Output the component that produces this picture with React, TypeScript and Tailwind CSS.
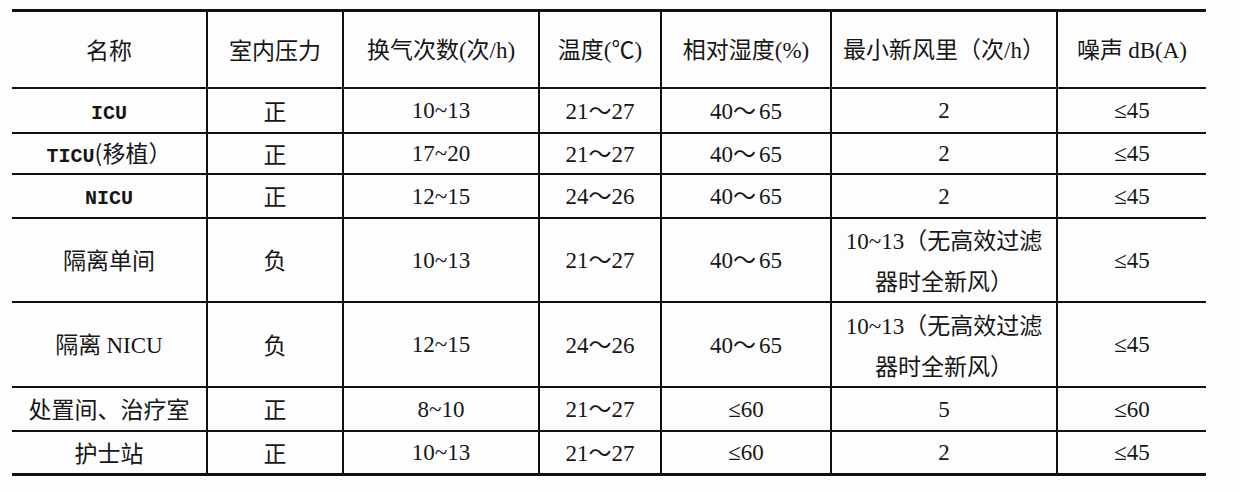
const cjk = "font-['Noto_Sans_CJK_SC','Noto_Sans',sans-serif]";
const serif = "font-['Liberation_Serif','Noto_Sans_CJK_SC',serif]";
const mono = "font-['Liberation_Mono','Noto_Sans_CJK_SC',monospace]";

const widths = [
  "w-[196px]",
  "w-[136px]",
  "w-[196px]",
  "w-[122px]",
  "w-[170px]",
  "w-[226px]",
  "w-[148px]",
];

type Row = {
  h: string;
  cells: React.ReactNode[];
  last?: boolean;
};

const T = (s: string) => <span className={serif}>{s}</span>;
const C = (s: string) => <span className={cjk}>{s}</span>;
const M = (s: string) => <span className={`${mono} font-bold text-[20px]`}>{s}</span>;

const range = (a: string, b: string, gap = false) => (
  <>
    {T(a)}
    {C("～")}
    <span className={`${serif} ${gap ? "ml-[3px]" : ""}`}>{b}</span>
  </>
);

const multi = (
  <span className="block leading-[38px]">
    <span className="block">
      {T("10~13")}
      {C("（无高效过滤")}
    </span>
    <span className="block">{C("器时全新风）")}</span>
  </span>
);

const rows: Row[] = [
  {
    h: "h-[77px]",
    cells: [
      C("名称"),
      C("室内压力"),
      <>
        {C("换气次数")}
        {T("(")}
        {C("次")}
        {T("/h)")}
      </>,
      <>
        {C("温度")}
        {T("(")}
        {C("℃")}
        {T(")")}
      </>,
      <>
        {C("相对湿度")}
        {T("(%)")}
      </>,
      <>
        {C("最小新风里（次")}
        {T("/h")}
        {C("）")}
      </>,
      <>
        {C("噪声 ")}
        {T("dB(A)")}
      </>,
    ],
  },
  {
    h: "h-[45px]",
    cells: [M("ICU"), C("正"), T("10~13"), range("21", "27"), range("40", "65", true), T("2"), T("≤45")],
  },
  {
    h: "h-[41px]",
    cells: [<>{M("TICU")}{C("(移植）")}</>, C("正"), T("17~20"), range("21", "27"), range("40", "65", true), T("2"), T("≤45")],
  },
  {
    h: "h-[44px]",
    cells: [M("NICU"), C("正"), T("12~15"), range("24", "26"), range("40", "65", true), T("2"), T("≤45")],
  },
  {
    h: "h-[84px]",
    cells: [C("隔离单间"), C("负"), T("10~13"), range("21", "27"), range("40", "65", true), multi, T("≤45")],
  },
  {
    h: "h-[85px]",
    cells: [<>{C("隔离 ")}{T("NICU")}</>, C("负"), T("12~15"), range("24", "26"), range("40", "65", true), multi, T("≤45")],
  },
  {
    h: "h-[44px]",
    cells: [C("处置间、治疗室"), C("正"), T("8~10"), range("21", "27"), T("≤60"), T("5"), T("≤60")],
  },
  {
    h: "h-[44px]",
    last: true,
    cells: [C("护士站"), C("正"), T("10~13"), range("21", "27"), T("≤60"), T("2"), T("≤45")],
  },
];

export default function App() {
  return (
    <div className="w-[1240px] h-[492px] bg-[#fdfdfe] pt-[9px] pl-[12px] text-[#161616] text-[23px]">
      <div className="w-[1194px] border-t-[3px] border-[#111]">
        {rows.map((row, i) => (
          <div
            key={i}
            className={`flex ${row.h} ${row.last ? "border-b-[3px]" : "border-b-2"} border-[#111]`}
          >
            {row.cells.map((cell, j) => (
              <div
                key={j}
                className={`${widths[j]} shrink-0 flex items-center justify-center text-center whitespace-pre ${
                  j < 6 ? "border-r-2 border-[#111]" : ""
                }`}
              >
                <span>{cell}</span>
              </div>
            ))}
          </div>
        ))}
      </div>
    </div>
  );
}
